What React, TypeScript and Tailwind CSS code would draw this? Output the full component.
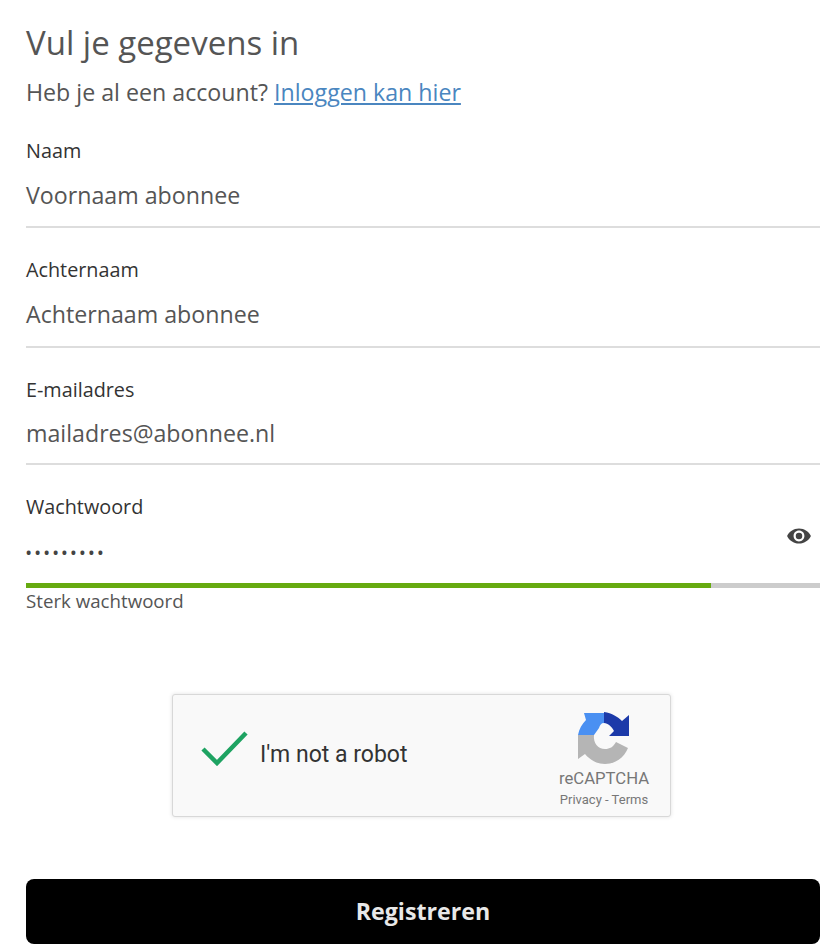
function Field({ label, value, className, valueClass }: { label: string; value: string; className: string; valueClass: string }) {
  return (
    <div className={className}>
      <div className="h-[25px] text-[19.8px] leading-[25px] text-[#333]">{label}</div>
      <div className={`border-b-2 border-[#ddd] text-[23.2px] leading-[40px] text-[#555] ${valueClass}`}>{value}</div>
    </div>
  )
}

function RecaptchaLogo() {
  return (
    <svg viewBox="0 0 52 52" className="h-[52px] w-[52px]">
      <path d="M6 1 H26 V11 C23 11 22 13 21 16 L16 23 H0 C1 17 4 12 8 8 Z" fill="#4a90f2" />
      <path d="M26 0 C34 1 40 5 44 9 L51 3 V24 H31 L36 19 C34 15 30 11 26 11 Z" fill="#1c3aa9" />
      <path d="M0 23 H16 C15 31 20 37 27 37 C32 37 35 35 38 30 L50 36 C46 46 37 52 27 52 C19 52 12 48 7 42 L0 47 Z" fill="#b5b5b5" />
    </svg>
  )
}

export default function App() {
  return (
    <div className="h-[950px] w-[840px] overflow-hidden bg-white font-['Open_Sans',sans-serif]">
      <div className="ml-[26px] w-[794px]">
        <h1 className="pt-[21px] text-[33px] leading-[44px] text-[#555]">Vul je gegevens in</h1>
        <p className="mt-[12px] text-[23.2px] leading-[30px] text-[#555]">
          Heb je al een account?{' '}
          <a className="text-[#4a86c0] underline">Inloggen kan hier</a>
        </p>
        <Field className="mt-[31px]" label="Naam" value="Voornaam abonnee" valueClass="mt-[12px] h-[53px]" />
        <Field className="mt-[29px]" label="Achternaam" value="Achternaam abonnee" valueClass="mt-[12px] h-[54px]" />
        <Field className="mt-[29px]" label="E-mailadres" value="mailadres@abonnee.nl" valueClass="mt-[11px] h-[52px]" />

        <div className="mt-[29px]">
          <div className="h-[25px] text-[19.8px] leading-[25px] text-[#333]">Wachtwoord</div>
          <div className="relative h-[64px]">
            <div className="pt-[24px] text-[14px] font-bold leading-[20px] tracking-[3.7px] text-[#444]">•••••••••</div>
            <svg viewBox="0 0 24 24" className="absolute right-[8px] top-[4px] h-[26px] w-[26px]" fill="#444">
              <path d="M12 5C7 5 2.7 8.1 1 12c1.7 3.9 6 7 11 7s9.3-3.1 11-7c-1.7-3.9-6-7-11-7zm0 12c-2.8 0-5-2.2-5-5s2.2-5 5-5 5 2.2 5 5-2.2 5-5 5zm0-8a3 3 0 1 0 0 6 3 3 0 0 0 0-6z" />
            </svg>
          </div>
          <div className="flex h-[5px] bg-[#ccc]">
            <div className="w-[685px] bg-[#66aa10]" />
          </div>
          <div className="mt-[1px] text-[18.7px] leading-[24px] text-[#555]">Sterk wachtwoord</div>
        </div>

        <div className="ml-[146px] mt-[81px] flex h-[123px] w-[499px] items-start rounded-[3px] border border-[#d8d8d8] bg-[#f9f9f9] shadow-[0_0_4px_rgba(0,0,0,0.12)]">
          <svg viewBox="0 0 48 36" className="ml-[27px] mt-[35px] h-[36px] w-[48px]" fill="none" stroke="#1ea362" strokeWidth="4.5">
            <path d="M3 19 L17 33 L46 3" />
          </svg>
          <span className="ml-[12px] mt-[46px] font-['Roboto',sans-serif] text-[23px] leading-[28px] text-[#333]">I'm not a robot</span>
          <div className="ml-auto mr-[20px] flex w-[92px] flex-col items-center pt-[17px] font-['Roboto',sans-serif]">
            <RecaptchaLogo />
            <div className="mt-[5px] text-[16.7px] leading-[20px] text-[#777]">reCAPTCHA</div>
            <div className="mt-[3px] whitespace-nowrap text-[13px] leading-[16px] text-[#777]">Privacy - Terms</div>
          </div>
        </div>

        <button className="mt-[62px] flex h-[65px] w-full items-center justify-center rounded-[8px] bg-black text-[23.2px] font-bold text-[#e8e8e8]">
          Registreren
        </button>
      </div>
    </div>
  )
}
